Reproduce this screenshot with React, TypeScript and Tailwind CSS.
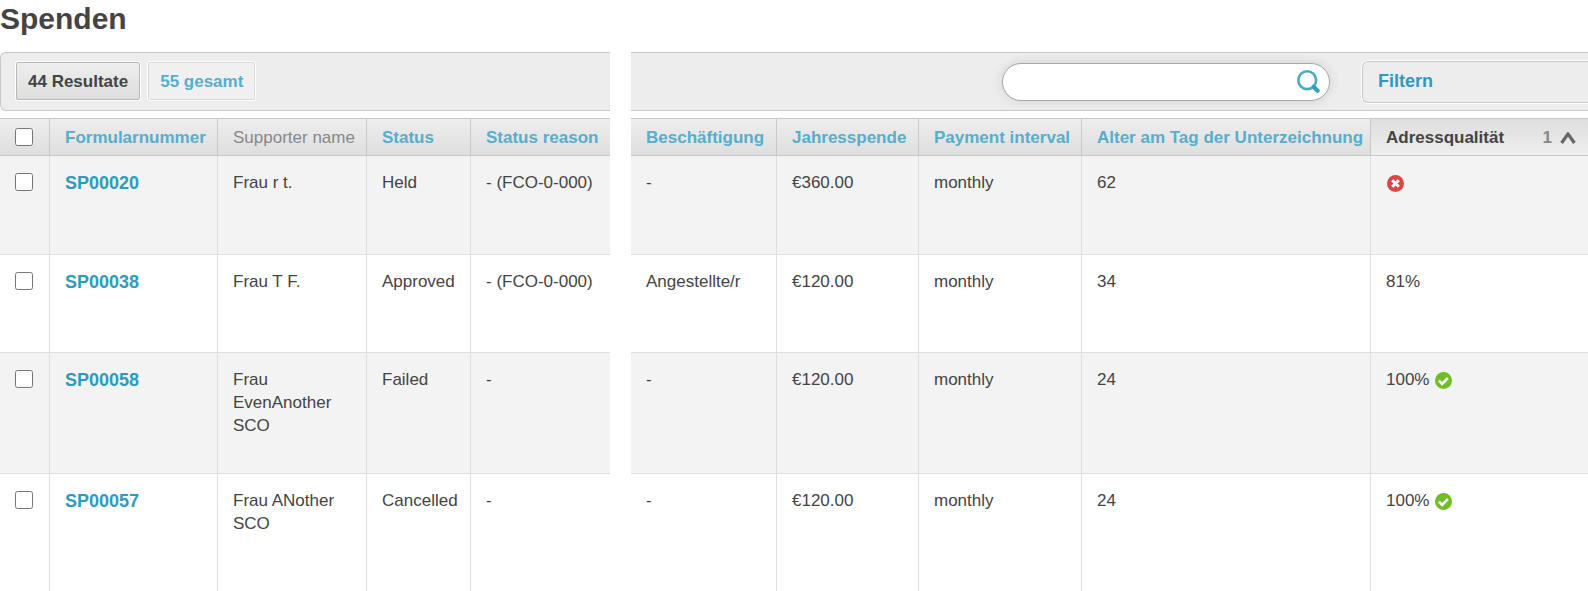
import { useState } from "react";
import type { ReactNode } from "react";
import clsx from "clsx";

type Donation = {
  id: string;
  supporter: string;
  status: string;
  reason: string;
  occupation: string;
  amount: string;
  interval: string;
  age: number;
  quality: string | null;
  verified: boolean;
  height: string;
};

const donations: Donation[] = [
  { id: "SP00020", supporter: "Frau r t.", status: "Held", reason: "- (FCO-0-000)", occupation: "-", amount: "€360.00", interval: "monthly", age: 62, quality: null, verified: false, height: "h-[99px]" },
  { id: "SP00038", supporter: "Frau T F.", status: "Approved", reason: "- (FCO-0-000)", occupation: "Angestellte/r", amount: "€120.00", interval: "monthly", age: 34, quality: "81%", verified: false, height: "h-[98px]" },
  { id: "SP00058", supporter: "Frau EvenAnother SCO", status: "Failed", reason: "-", occupation: "-", amount: "€120.00", interval: "monthly", age: 24, quality: "100%", verified: true, height: "h-[121px]" },
  { id: "SP00057", supporter: "Frau ANother SCO", status: "Cancelled", reason: "-", occupation: "-", amount: "€120.00", interval: "monthly", age: 24, quality: "100%", verified: true, height: "h-[117px]" },
];

const SearchIcon = () => (
  <svg width="24" height="24" viewBox="0 0 24 24" fill="none" aria-hidden="true">
    <circle cx="10.2" cy="10.2" r="8.9" stroke="#4aa9c6" strokeWidth="2.6" />
    <path d="M16.8 17l3.8 3.8" stroke="#359fc2" strokeWidth="4.4" strokeLinecap="round" />
  </svg>
);

const SortIcon = () => (
  <svg width="16" height="13" viewBox="0 0 16 13" fill="none" aria-hidden="true">
    <path d="M1.6 12L8 2.8 14.4 12" stroke="#666" strokeWidth="3.2" strokeLinejoin="round" />
  </svg>
);

const ErrorIcon = () => (
  <svg className="ml-px inline-block align-[-4px]" width="17" height="17" viewBox="0 0 17 17" role="img" aria-label="Fehler">
    <circle cx="8.5" cy="8.5" r="8.5" fill="#dc4545" />
    <path d="M5.2 5.2l6.6 6.6M11.8 5.2l-6.6 6.6" stroke="#fff" strokeWidth="3" />
  </svg>
);

const CheckIcon = () => (
  <svg className="ml-px inline-block align-[-4px]" width="17" height="17" viewBox="0 0 17 17" role="img" aria-label="Geprüft">
    <circle cx="8.5" cy="8.5" r="8.5" fill="#6fbe28" />
    <path d="M3.9 8.6l3.2 3.2 5.8-5.8" stroke="#fff" strokeWidth="2.6" fill="none" />
  </svg>
);

const HeadCell = ({ children, first, active }: { children: ReactNode; first?: boolean; active?: boolean }) => (
  <th
    className={clsx(
      "h-[38px] border-y border-[#c8c8c8] p-0 pl-[15px] text-left font-bold whitespace-nowrap",
      active ? "bg-linear-to-b from-[#dedede] to-[#eeeeee]" : "bg-linear-to-b from-[#eeeeee] to-[#dedede]",
      !first && "border-l"
    )}
    aria-sort={active ? "ascending" : undefined}
  >
    {children}
  </th>
);

const Cell = ({ children, first }: { children: ReactNode; first?: boolean }) => (
  <td
    className={clsx(
      "border-b border-[#dfdfdf] pt-[15px] pr-2 pb-0 pl-[15px] align-top [tr:last-child>&]:border-b-0",
      !first && "border-l"
    )}
  >
    {children}
  </td>
);

const SortLink = ({ children }: { children: ReactNode }) => (
  <a href="#" className="text-[#56aecd] hover:underline">
    {children}
  </a>
);

const Toolbar = () => {
  const [query, setQuery] = useState<string>("");

  return (
    <div className="flex">
      <div className="flex h-[59px] w-[610px] shrink-0 items-start gap-2 rounded-l-md border border-r-0 border-[#c8c8c8] bg-[#ededed] pt-[9px] pl-[15px]">
        <button
          type="button"
          className="h-[38px] rounded-xs border border-[#b8b8b8] bg-linear-to-b from-[#eeeeee] to-[#dedede] px-[11px] font-bold text-[#444] ring-1 ring-white"
        >
          44 Resultate
        </button>
        <button
          type="button"
          className="h-[38px] rounded-xs border border-[#d8d8d8] bg-[#f0f0f0] px-[11px] font-bold text-[#56aecd] ring-1 ring-white"
        >
          55 gesamt
        </button>
      </div>

      <div className="ml-[21px] flex h-[59px] min-w-0 flex-1 items-center justify-end gap-8 border-y border-[#c8c8c8] bg-[#ededed]">
        <form
          role="search"
          className="flex h-[38px] w-[328px] items-center rounded-full border border-[#a8a8a8] bg-white pr-2 pl-4 shadow-[0_0_12px_rgba(0,0,0,0.12)]"
          onSubmit={(e) => e.preventDefault()}
        >
          <input
            type="text"
            aria-label="Suche"
            className="min-w-0 flex-1 bg-transparent outline-none"
            value={query}
            onChange={(e) => setQuery(e.target.value)}
          />
          <button type="submit" aria-label="Suchen">
            <SearchIcon />
          </button>
        </form>
        <button
          type="button"
          className="h-[42px] w-[226px] shrink-0 rounded-l-md border border-r-0 border-[#c8c8c8] bg-[#ededed] pl-[15px] text-left text-[18px] font-bold text-[#2f9abf] ring-1 ring-white"
        >
          Filtern
        </button>
      </div>
    </div>
  );
};

const App = () => {
  const [selected, setSelected] = useState<string[]>([]);
  const allSelected = selected.length === donations.length;

  const toggle = (id: string) => {
    setSelected((prev) => (prev.includes(id) ? prev.filter((i) => i !== id) : [...prev, id]));
  };

  return (
    <main className="overflow-hidden bg-white font-['Liberation_Sans',Arial,sans-serif] text-[17px] leading-[23px] text-[#444]">
      <h1 className="h-[52px] text-[30px] leading-[37px] font-bold">Spenden</h1>

      <Toolbar />

      <table className="mt-[7px] w-full table-fixed border-separate border-spacing-0">
        <colgroup>
          <col className="w-[49px]" />
          <col className="w-[168px]" />
          <col className="w-[149px]" />
          <col className="w-[104px]" />
          <col className="w-[140px]" />
          <col className="w-[21px]" />
          <col className="w-[145px]" />
          <col className="w-[142px]" />
          <col className="w-[163px]" />
          <col className="w-[289px]" />
          <col />
        </colgroup>
        <thead>
          <tr>
            <HeadCell first>
              <input
                type="checkbox"
                aria-label="Alle auswählen"
                className="block size-[18px]"
                checked={allSelected}
                onChange={() => setSelected(allSelected ? [] : donations.map((d) => d.id))}
              />
            </HeadCell>
            <HeadCell><SortLink>Formularnummer</SortLink></HeadCell>
            <HeadCell><span className="font-normal text-[#888]">Supporter name</span></HeadCell>
            <HeadCell><SortLink>Status</SortLink></HeadCell>
            <HeadCell><SortLink>Status reason</SortLink></HeadCell>
            <td />
            <HeadCell first><SortLink>Beschäftigung</SortLink></HeadCell>
            <HeadCell><SortLink>Jahresspende</SortLink></HeadCell>
            <HeadCell><SortLink>Payment interval</SortLink></HeadCell>
            <HeadCell><SortLink>Alter am Tag der Unterzeichnung</SortLink></HeadCell>
            <HeadCell active>
              <div className="flex items-center pr-3">
                <a href="#" className="flex-1 hover:underline">Adressqualität</a>
                <span className="mr-2 text-[#888]">1</span>
                <SortIcon />
              </div>
            </HeadCell>
          </tr>
        </thead>
        <tbody>
          {donations.map((d, idx) => (
            <tr
              key={d.id}
              className={clsx(d.height, idx % 2 === 0 && "[&>td:not(:empty)]:bg-[#f3f3f3]")}
            >
              <Cell first>
                <input
                  type="checkbox"
                  aria-label={`${d.id} auswählen`}
                  className="mt-0.5 block size-[18px]"
                  checked={selected.includes(d.id)}
                  onChange={() => toggle(d.id)}
                />
              </Cell>
              <Cell>
                <a href="#" className="inline-block text-[18px] leading-[25px] font-bold text-[#2f9abf] hover:underline">{d.id}</a>
              </Cell>
              <Cell>{d.supporter}</Cell>
              <Cell>{d.status}</Cell>
              <Cell>{d.reason}</Cell>
              <td />
              <Cell first>{d.occupation}</Cell>
              <Cell>{d.amount}</Cell>
              <Cell>{d.interval}</Cell>
              <Cell>{d.age}</Cell>
              <Cell>
                {d.quality ?? <ErrorIcon />} {d.verified && <CheckIcon />}
              </Cell>
            </tr>
          ))}
        </tbody>
      </table>
    </main>
  );
};

export default App;
